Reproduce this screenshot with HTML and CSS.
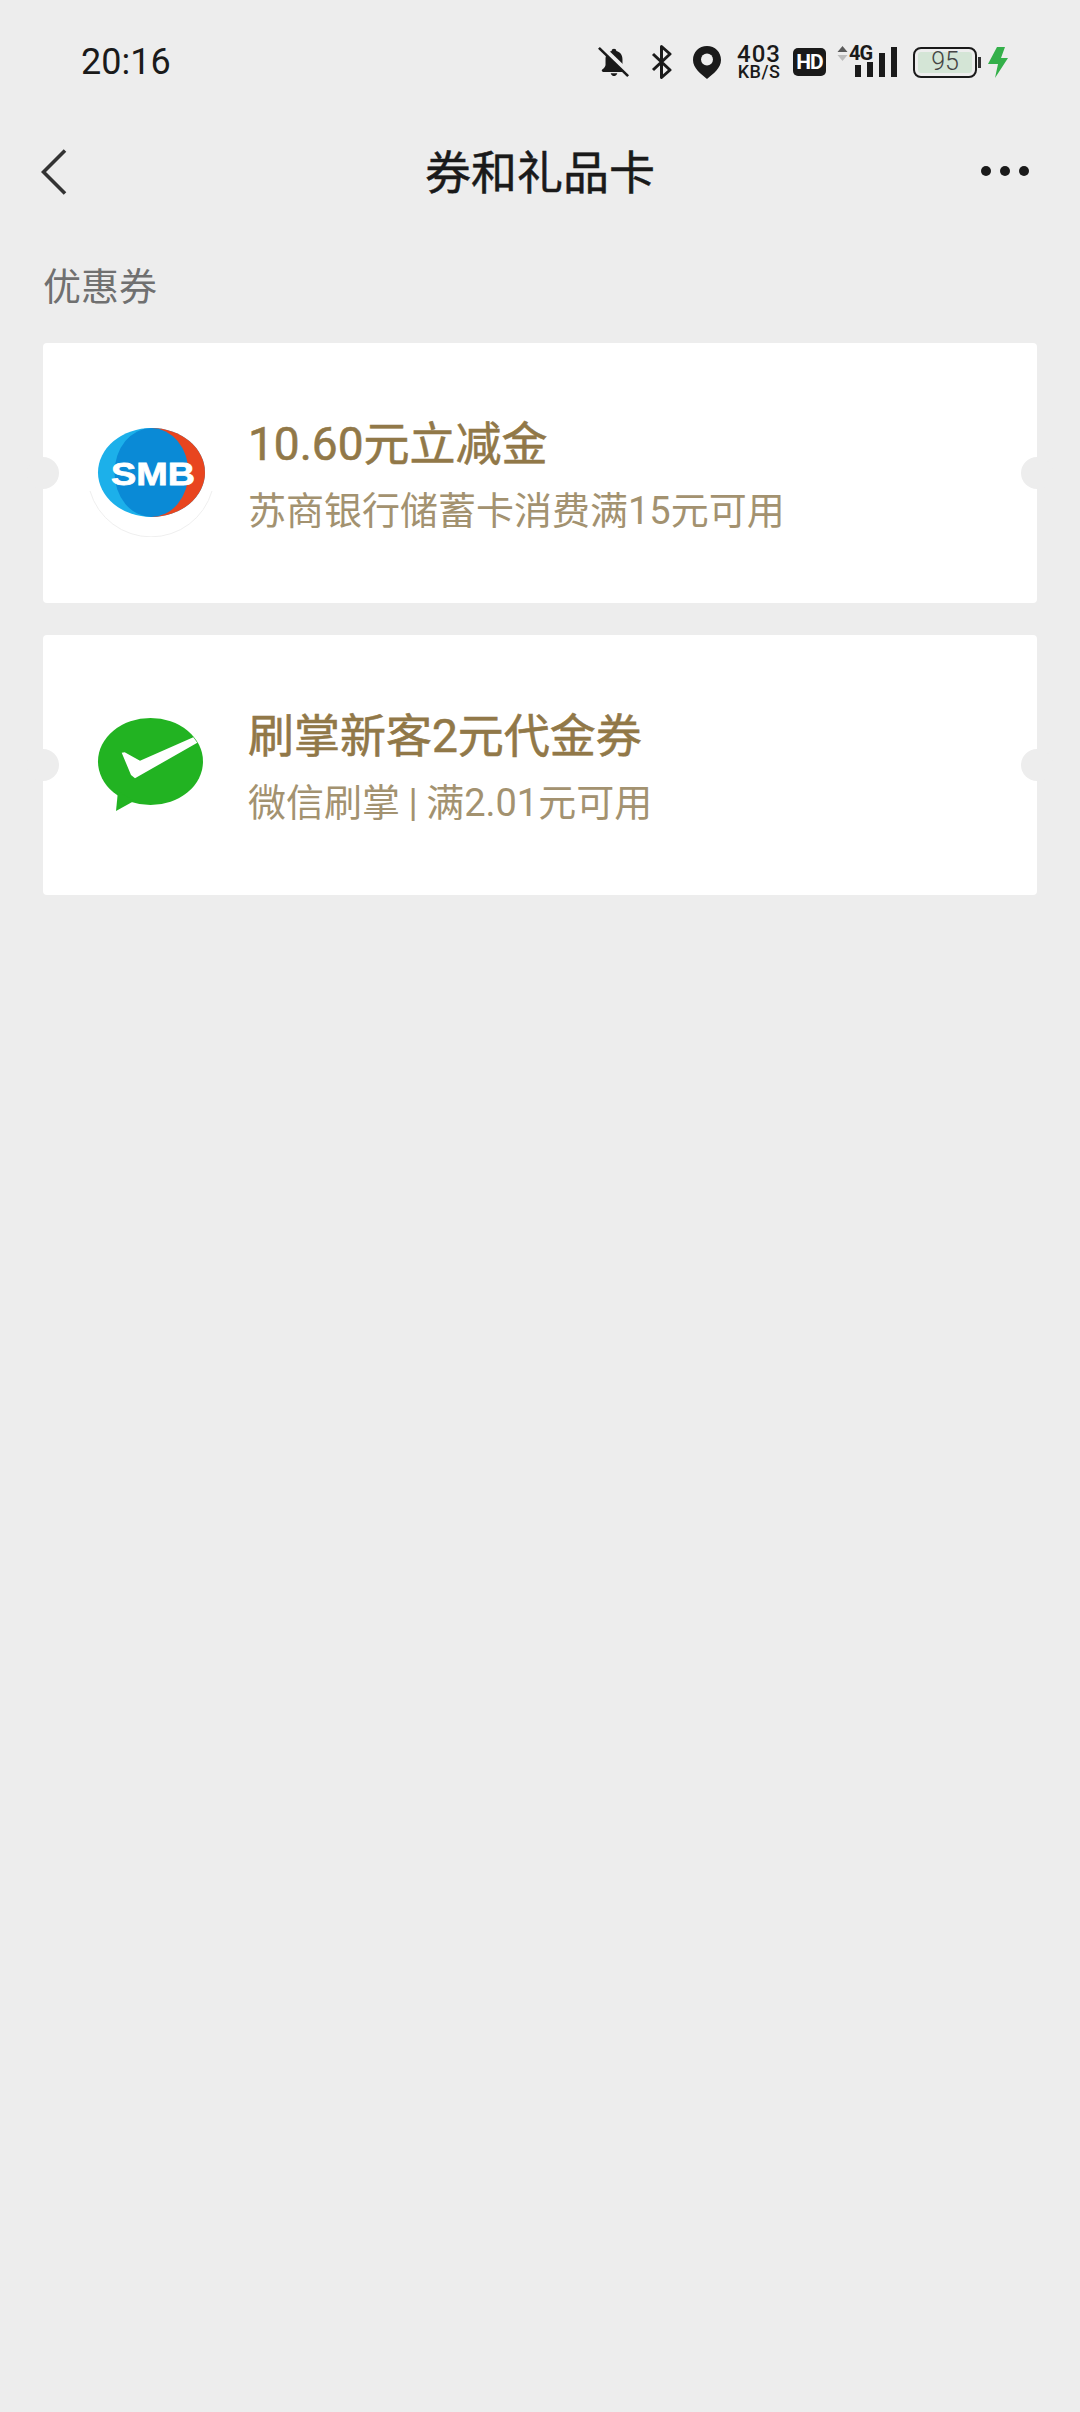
FILE: index.html
```html
<!DOCTYPE html>
<html lang="zh-CN">
<head>
    <meta charset="UTF-8">
    <meta name="viewport" content="width=device-width, initial-scale=1.0">
    <title>券和礼品卡</title>
    <link rel="stylesheet" href="styles.css">
</head>
<body>
    <!-- Status bar -->
    <div class="status-bar">
        <span class="time">20:16</span>
        <div class="status-icons">
            <svg class="ic-bell" width="32" height="34" viewBox="0 0 34 34">
                <path d="M17 3c-1.400 0-2.500 1-2.500 2.300C10 6.500 8 10 8 14v6c0 2-1.500 3.500-3.500 5-1 .8-.5 2.500 1 2.500h23c1.500 0 2-1.700 1-2.500-2-1.500-3.500-3-3.500-5v-6c0-4-2-7.500-6.500-8.700C19.500 4 18.400 3 17 3z" fill="#1a1a1a"/>
                <path d="M13.500 29h7c-.5 2-2 3-3.500 3s-3-1-3.500-3z" fill="#1a1a1a"/>
                <path d="M3 0l31 30" stroke="#ededed" stroke-width="5"/>
                <path d="M1 2l31 30" stroke="#1a1a1a" stroke-width="2.800"/>
            </svg>
            <svg class="ic-bt" width="22" height="34" viewBox="0 0 22 34">
                <path d="M2 9l17 16-8.500 7.500V1.500L19 9 2 25" fill="none" stroke="#1a1a1a" stroke-width="3" stroke-linejoin="round"/>
            </svg>
            <svg class="ic-pin" width="28" height="33" viewBox="0 0 28 33">
                <path d="M14 0C6 0 0 6 0 14c0 8 8 14 14 19 6-5 14-11 14-19C28 6 22 0 14 0z" fill="#1a1a1a"/>
                <circle cx="14" cy="13.500" r="6" fill="#ededed"/>
            </svg>
            <div class="net-speed">
                <span class="net-num">403</span>
                <span class="net-unit">KB/S</span>
            </div>
            <span class="hd">HD</span>
            <svg class="ic-updown" width="11" height="15" viewBox="0 0 11 15">
                <path d="M5.500 0L10.500 6H.5z" fill="#5a5a5a"/>
                <path d="M5.500 15L10.500 9H.5z" fill="#bdbdbd"/>
            </svg>
            <div class="signal">
                <span class="signal-label">4G</span>
                <i class="bar bar-1"></i>
                <i class="bar bar-2"></i>
                <i class="bar bar-3"></i>
                <i class="bar bar-4"></i>
            </div>
            <div class="battery">
                <div class="battery-body"><span class="battery-level">95</span></div>
                <i class="battery-nub"></i>
            </div>
            <svg class="ic-bolt" width="20" height="31" viewBox="0 0 20 31">
                <path d="M9 0h8l-4 11h7L7 31l3-14H0z" fill="#34b04a"/>
            </svg>
        </div>
    </div>

    <!-- Title bar -->
    <header class="nav">
        <svg class="back" width="26" height="46" viewBox="0 0 26 46">
            <path d="M24 1.500L2.500 23 24 44.500" fill="none" stroke="#333" stroke-width="3.600"/>
        </svg>
        <h1 class="nav-title">券和礼品卡</h1>
        <div class="more"><i></i><i></i><i></i></div>
    </header>

    <main class="content">
        <h2 class="section-label">优惠券</h2>

        <div class="coupon">
            <svg class="coupon-icon" width="128" height="128" viewBox="0 0 128 128">
                <path d="M3 82a63.500 63.500 0 0 0 122 0" fill="none" stroke="#efefef"/>
                <ellipse cx="64.500" cy="63.500" rx="53.500" ry="44.500" fill="#1cb0ea"/>
                <path d="M64.500 19a53.500 44.500 0 0 1 0 89z" fill="#e8451f"/>
                <ellipse cx="64.500" cy="63.500" rx="37" ry="44.500" fill="#0a8ad6"/>
                <text class="smb" x="24" y="76" textLength="84" lengthAdjust="spacingAndGlyphs">SMB</text>
            </svg>
            <div class="coupon-text">
                <div class="coupon-title">10.60元立减金</div>
                <div class="coupon-desc">苏商银行储蓄卡消费满15元可用</div>
            </div>
        </div>

        <div class="coupon">
            <svg class="coupon-icon" width="128" height="128" viewBox="0 0 128 128">
                <ellipse cx="63.500" cy="60.500" rx="52.500" ry="43.500" fill="#22b322"/>
                <path d="M31 90L29 110 47 100z" fill="#22b322"/>
                <path d="M34.700 51.700l3-.5L53 59.700 106.300 36.300 110.300 41.700 48 77.300l-4-3.300z" fill="#fff"/>
            </svg>
            <div class="coupon-text">
                <div class="coupon-title">刷掌新客2元代金券</div>
                <div class="coupon-desc coupon-desc-tight">微信刷掌 | 满2.01元可用</div>
            </div>
        </div>
    </main>
</body>
</html>
```

FILE: styles.css
```css
* {
    box-sizing: border-box;
}

body {
    margin: 0;
    padding: 0;
    min-height: 2412px;
    background-color: #ededed;
    font-family: Roboto, "Noto Sans CJK SC", sans-serif;
}

/* Status bar */
.status-bar {
    height: 124px;
    padding: 0 72px 0 81px;
    display: flex;
    align-items: center;
    justify-content: space-between;
}

.time {
    font-size: 36px;
    color: #1a1a1a;
}

.status-icons {
    display: flex;
    align-items: center;
}

.ic-bt {
    margin-left: 21px;
}

.ic-pin {
    margin-left: 20px;
}

.net-speed {
    margin-left: 15px;
    width: 46px;
    display: flex;
    flex-direction: column;
    align-items: center;
    color: #1a1a1a;
}

.net-num {
    font-size: 24px;
    line-height: 20px;
    font-weight: 500;
    letter-spacing: 1px;
}

.net-unit {
    font-size: 18px;
    line-height: 16px;
    font-weight: 500;
    letter-spacing: .5px;
}

.hd {
    margin-left: 11px;
    width: 33px;
    height: 28px;
    border-radius: 5px;
    background-color: #1a1a1a;
    color: #fff;
    font-size: 21px;
    line-height: 28px;
    font-weight: 700;
    text-align: center;
    letter-spacing: -1px;
}

.ic-updown {
    margin: 0 0 18px 11px;
}

.signal {
    position: relative;
    margin-left: 5px;
    width: 44px;
    height: 30px;
    display: flex;
    align-items: flex-end;
    justify-content: flex-end;
    gap: 6px;
}

.signal-label {
    position: absolute;
    left: -4px;
    top: -4px;
    font-size: 20px;
    line-height: 20px;
    font-weight: 700;
    color: #1a1a1a;
    letter-spacing: -1px;
}

.bar {
    width: 6px;
    background-color: #1a1a1a;
}

.bar-1 {
    height: 12px;
}

.bar-2 {
    height: 15px;
}

.bar-3 {
    height: 24px;
}

.bar-4 {
    height: 30px;
}

.battery {
    margin-left: 16px;
    display: flex;
    align-items: center;
}

.battery-body {
    width: 64px;
    height: 31px;
    padding: 3px;
    border: 2.500px solid #1a1a1a;
    border-radius: 8px;
}

.battery-level {
    display: block;
    height: 100%;
    background-color: #d4e5d6;
    border-radius: 3px;
    color: #444;
    font-size: 25px;
    line-height: 20px;
    font-weight: 300;
    text-align: center;
}

.battery-nub {
    width: 3px;
    height: 11px;
    margin-left: 1px;
    background-color: #333;
}

.ic-bolt {
    margin-left: 7px;
}

/* Title bar */
.nav {
    height: 98px;
    padding: 0 41px;
    margin-bottom: 2px;
    display: grid;
    grid-template-columns: 1fr auto 1fr;
    align-items: center;
}

.nav-title {
    margin: 0;
    font-size: 46px;
    line-height: 60px;
    font-weight: 400;
    color: #1a1a1a;
    -webkit-text-stroke: .5px #1a1a1a;
}

.more {
    display: flex;
    justify-content: flex-end;
    gap: 9px;
    margin: -4px 10px 0 0;
}

.more i {
    width: 10px;
    height: 10px;
    border-radius: 50%;
    background-color: #1a1a1a;
}

.back {
    margin-top: -3px;
}

/* Coupons */
.content {
    padding: 36px 43px 0;
}

.section-label {
    margin: 0 0 29px;
    font-size: 38px;
    line-height: 54px;
    font-weight: 400;
    color: #707070;
}

.coupon {
    position: relative;
    height: 260px;
    margin-bottom: 32px;
    padding: 0 44px;
    display: flex;
    align-items: center;
    gap: 33px;
    background-color: #fff;
    border-radius: 4px;
}

.coupon::before,
.coupon::after {
    content: "";
    position: absolute;
    top: 114px;
    width: 32px;
    height: 32px;
    border-radius: 50%;
    background-color: #ededed;
}

.coupon::before {
    left: -16px;
}

.coupon::after {
    right: -16px;
}

.coupon-text {
    padding-top: 4px;
}

.coupon-title {
    font-size: 46px;
    line-height: 60px;
    font-weight: 400;
    color: #917848;
    -webkit-text-stroke: .6px #917848;
}

.coupon-desc {
    margin-top: 12px;
    font-size: 38px;
    line-height: 50px;
    color: #a39270;
}

.coupon-desc-tight {
    word-spacing: -1px;
}

.smb {
    font-family: "Liberation Sans", sans-serif;
    font-size: 32px;
    font-weight: 700;
    fill: #fff;
    stroke: #fff;
    stroke-width: .8px;
}
```
